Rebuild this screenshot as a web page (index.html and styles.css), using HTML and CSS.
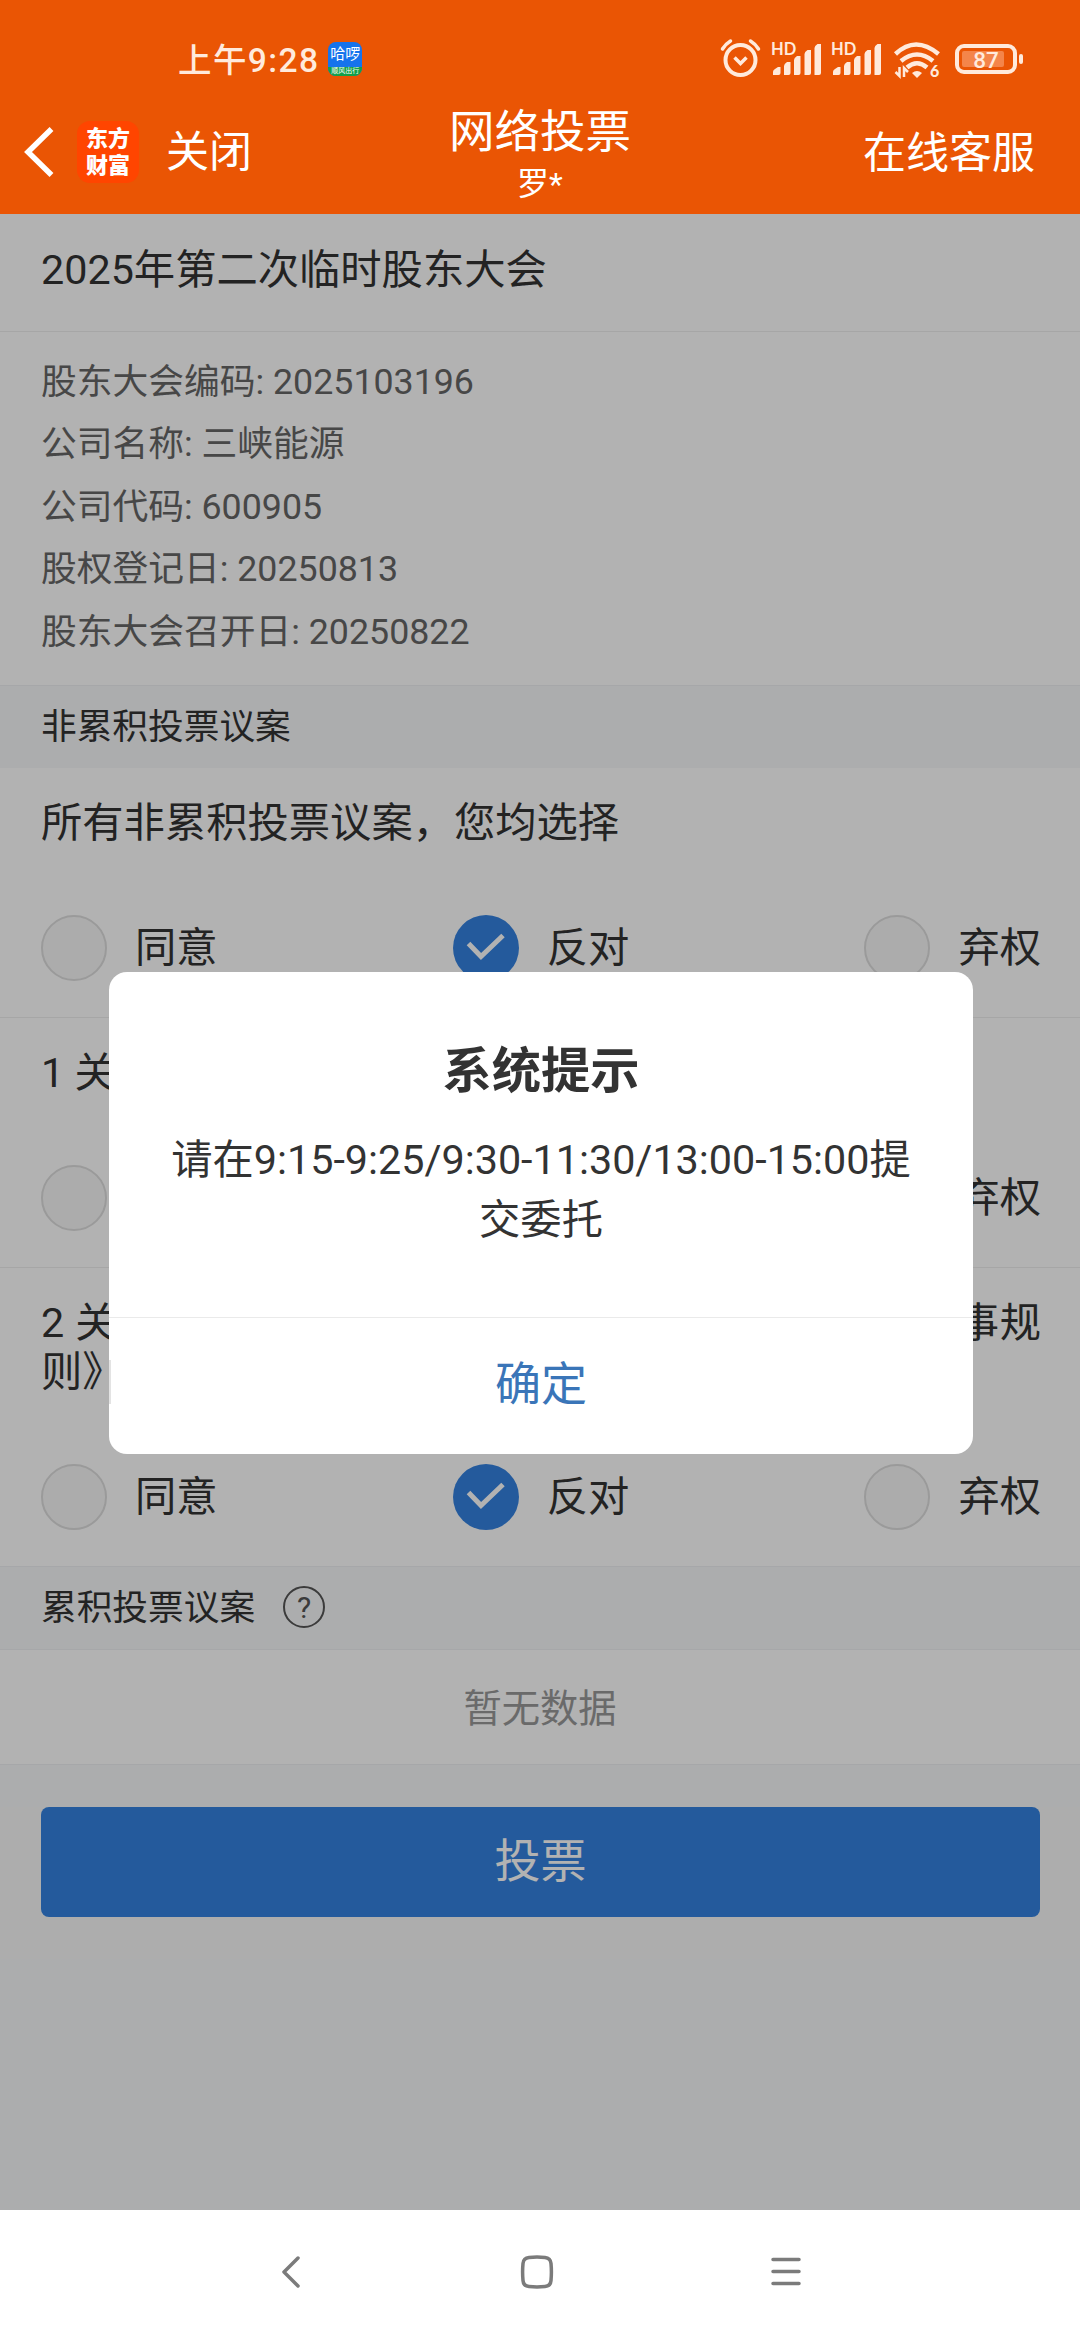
FILE: index.html
```
<!DOCTYPE html>
<html lang="zh-CN">
<head>
    <meta charset="UTF-8">
    <title>网络投票</title>
    <link rel="stylesheet" href="styles.css">
</head>
<body>

<header class="header">
    <div class="status-bar">
        <div class="status-left">
            <span class="time">上午9:28</span>
            <div class="hello-icon">
                <span class="hello-name">哈啰</span>
                <span class="hello-tag">顺风出行</span>
            </div>
        </div>
        <svg class="status-icons" width="310" height="50" viewBox="0 0 310 50" fill="none" stroke="#ffeadc">
            <!-- alarm -->
            <circle cx="20.500" cy="27" r="15" stroke-width="4"/>
            <path d="M14.500 24.500l6 6 6-6" stroke-width="3.500"/>
            <path d="M2.500 16q3-5 8-8M38.500 16q-3-5-8-8" stroke-width="3.500" stroke-linecap="round"/>
            <!-- signals -->
            <g id="signal" fill="#ffeadc" stroke="none">
                <text x="51" y="22" class="hd">HD</text>
                <path d="M53 42v-3q0-2 2-3l3-2h2.500v6q0 2-2 2zM64 42V33q0-2 3-4h3.500v11q0 2-2 2zM74 42V27q0-2 3-4h3.500v17q0 2-2 2zM84.500 42V21q0-2 3-4H91v23q0 2-2 2zM94.500 42V15q0-2 3-4h3.500v29q0 2-2 2z"/>
            </g>
            <use href="#signal" x="60"/>
            <!-- wifi -->
            <path d="M175.500 21q20-19 43 0M181 28q16-13 32 0M187 34.500q10-8.500 20 0" stroke-width="4.500"/>
            <path d="M192 40q5-4 10 0l-5 5z" fill="#ffeadc" stroke="none"/>
            <path d="M179.500 34v9l-4-4M184 44v-9l4 4" stroke-width="2.500"/>
            <text x="210" y="43.500" class="wifi-num">6</text>
            <!-- battery -->
            <rect x="237" y="13" width="58" height="26" rx="7" stroke-width="4"/>
            <rect x="242" y="18" width="42" height="16" rx="2" fill="#f4854a" stroke="none"/>
            <rect x="299" y="21" width="4" height="10" rx="2" fill="#ffeadc" stroke="none"/>
            <text x="266" y="34.500" text-anchor="middle" class="battery-num">87</text>
        </svg>
    </div>
    <nav class="navbar">
        <div class="nav-left">
            <svg class="back" width="30" height="52" viewBox="0 0 30 52" fill="none" stroke="#fff" stroke-width="5.500">
                <path d="M27.500 3L4 26l23.500 23"/>
            </svg>
            <div class="logo">东方<br>财富</div>
            <span class="nav-text">关闭</span>
        </div>
        <div class="nav-center">
            <div class="nav-title">网络投票</div>
            <div class="nav-user">罗*</div>
        </div>
        <span class="nav-text nav-right">在线客服</span>
    </nav>
</header>

<main class="page">
    <h1 class="meeting-title">2025年第二次临时股东大会</h1>
    <div class="meeting-info">
        <p>股东大会编码: 2025103196</p>
        <p>公司名称: 三峡能源</p>
        <p>公司代码: 600905</p>
        <p>股权登记日: 20250813</p>
        <p>股东大会召开日: 20250822</p>
    </div>

    <h2 class="section-title">非累积投票议案</h2>

    <div class="proposal">
        <p class="proposal-name">所有非累积投票议案，您均选择</p>
        <div class="options">
            <label class="option"><span class="radio"></span>同意</label>
            <label class="option"><span class="radio checked"><svg width="40" height="30" viewBox="0 0 40 30"><path d="M2.500 10.500L15 23.500 37 2.500"/></svg></span>反对</label>
            <label class="option"><span class="radio"></span>弃权</label>
        </div>
    </div>
    <div class="proposal">
        <p class="proposal-name">1 关于修订《公司章程》的议案</p>
        <div class="options">
            <label class="option"><span class="radio"></span>同意</label>
            <label class="option"><span class="radio checked"><svg width="40" height="30" viewBox="0 0 40 30"><path d="M2.500 10.500L15 23.500 37 2.500"/></svg></span>反对</label>
            <label class="option"><span class="radio"></span>弃权</label>
        </div>
    </div>
    <div class="proposal">
        <p class="proposal-name">2 关于公司修订《三峡能源股份有限公司董事会议事规则》的议案</p>
        <div class="options">
            <label class="option"><span class="radio"></span>同意</label>
            <label class="option"><span class="radio checked"><svg width="40" height="30" viewBox="0 0 40 30"><path d="M2.500 10.500L15 23.500 37 2.500"/></svg></span>反对</label>
            <label class="option"><span class="radio"></span>弃权</label>
        </div>
    </div>

    <h2 class="section-title cumulative">累积投票议案<span class="help">?</span></h2>
    <div class="empty">暂无数据</div>

    <div class="submit">
        <button class="submit-btn">投票</button>
    </div>

    <div class="mask">
        <div class="dialog">
            <div class="dialog-body">
                <h3>系统提示</h3>
                <p>请在9:15-9:25/9:30-11:30/13:00-15:00提交委托</p>
            </div>
            <button class="dialog-btn">确定</button>
        </div>
    </div>
</main>

<footer class="system-nav">
    <svg width="1080" height="130" viewBox="0 0 1080 130" fill="none" stroke="#7b7b7b" stroke-width="3.500" stroke-linecap="round" stroke-linejoin="round">
        <path d="M298 48l-14 14 14 14"/>
        <path d="M529 47.500q8-.8 16 0 5.500.5 6 6 .8 8.500 0 17-.5 5.500-6 6-8 .8-16 0-5.500-.5-6-6-.8-8.500 0-17 .5-5.500 6-6z"/>
        <path d="M773 49.500h26M773 61.500h26M773 73.500h26"/>
    </svg>
</footer>

</body>
</html>
```
FILE: styles.css
```
* {
    box-sizing: border-box;
}

body {
    width: 1080px;
    height: 2340px;
    margin: 0;
    display: flex;
    flex-direction: column;
    overflow: hidden;
    font-family: Roboto, "Noto Sans CJK SC", sans-serif;
    font-size: 41.300px;
    color: #333333;
}

h1, h2, h3, p {
    margin: 0;
    font-weight: normal;
}

button {
    border: none;
    font-family: inherit;
}

/* header */
.header {
    height: 214px;
    background-color: #ea5504;
    color: #ffffff;
}

.status-bar {
    height: 94px;
    padding: 35px 50px 0 178px;
    display: flex;
    justify-content: space-between;
}

.status-left {
    display: flex;
    align-items: center;
    height: 48px;
    gap: 9px;
}

.time {
    padding-bottom: 4px;
    color: #ffeadc;
    font-size: 33.500px;
    font-weight: 500;
    letter-spacing: 1.400px;
}

.hello-icon {
    width: 34px;
    height: 34px;
    border-radius: 8px;
    overflow: hidden;
    display: flex;
    flex-direction: column;
    justify-content: space-between;
    background-color: #1673ec;
    text-align: center;
    white-space: nowrap;
}

.hello-name {
    font-size: 15px;
    line-height: 25px;
}

.hello-tag {
    background-color: #12a048;
    font-size: 7px;
    line-height: 9px;
}

.status-icons {
    margin-top: -2px;
}

.hd {
    font: 700 16.500px Lato, sans-serif;
}

.wifi-num {
    font: 900 16px Lato, sans-serif;
    fill: #ffeadc;
    stroke: none;
}

.battery-num {
    font: 500 22.500px Roboto, sans-serif;
    fill: #ffeadc;
    stroke: none;
}

.navbar {
    height: 120px;
    display: grid;
    grid-template-columns: 1fr 200px 1fr;
}

.nav-left {
    display: flex;
    align-items: center;
    height: 116px;
    padding-left: 24px;
}

.logo {
    width: 62px;
    height: 62px;
    margin: 0 27px 0 23px;
    padding-top: 4px;
    border-radius: 13px;
    background-color: #ff4500;
    font-size: 22px;
    font-weight: 900;
    line-height: 27px;
    text-align: center;
}

.nav-text {
    font-size: 43px;
    line-height: 119px;
}

.nav-center {
    text-align: center;
}

.nav-title {
    padding-top: 8px;
    font-size: 45.500px;
    line-height: 62px;
}

.nav-user {
    font-size: 32px;
    line-height: 41px;
}

.nav-right {
    text-align: right;
    padding-right: 45px;
}

/* page content */
.page {
    position: relative;
    height: 1996px;
    background-color: #f7f8fa;
}

.meeting-title {
    height: 118px;
    padding: 0 41px;
    background-color: #ffffff;
    border-bottom: 1px solid #eeeeee;
    font-size: 41.300px;
    line-height: 112px;
}

.meeting-info {
    height: 353px;
    padding: 19px 41px 0;
    background-color: #ffffff;
    color: #666666;
    font-size: 35.750px;
    line-height: 62.400px;
}

.section-title {
    display: flex;
    align-items: center;
    height: 83px;
    padding: 0 41px 7px;
    border-top: 1px solid #eeeff2;
    background-color: #f7f8fa;
    font-size: 35.700px;
}

.cumulative {
    height: 84px;
    border-bottom: 1px solid #eeeff2;
}

.help {
    width: 42px;
    height: 42px;
    margin: 4px 0 0 28px;
    border: 2px solid #555555;
    border-radius: 50%;
    color: #555555;
    font-size: 30px;
    line-height: 39px;
    text-align: center;
}

.proposal {
    padding: 31px 39px 36px 41px;
    background-color: #ffffff;
}

.proposal + .proposal {
    border-top: 1px solid #eeeeee;
}

.proposal-name {
    margin-bottom: 67px;
    line-height: 49px;
    text-align: justify;
}

.options {
    display: flex;
    justify-content: space-between;
}

.option {
    display: flex;
    align-items: center;
    height: 66px;
    line-height: 66px;
}

.radio {
    width: 66px;
    height: 66px;
    margin-right: 28px;
    border: 2px solid #dddddd;
    border-radius: 50%;
    background-color: #f7f7f7;
}

.radio.checked {
    display: flex;
    align-items: center;
    justify-content: center;
    border: none;
    background-color: #3482e0;
}

.radio path {
    fill: none;
    stroke: #ffffff;
    stroke-width: 5;
}

.empty {
    height: 115px;
    border-bottom: 1px solid #eeeff2;
    background-color: #ffffff;
    color: #999999;
    font-size: 38.300px;
    line-height: 118px;
    text-align: center;
}

.submit {
    margin-top: 42px;
    padding: 0 40px 42px 41px;
    background-color: #f8f8f8;
}

.submit-btn {
    display: block;
    width: 100%;
    height: 110px;
    padding-bottom: 12px;
    border-radius: 8px;
    background-color: #3482e0;
    color: #ffffff;
    font-size: 46px;
}

/* dialog */
.mask {
    position: absolute;
    inset: 0;
    display: flex;
    justify-content: center;
    align-items: center;
    background-color: rgba(0, 0, 0, 0.3);
}

.dialog {
    width: 864px;
    height: 482px;
    margin: 2px 0 0 2px;
    border-radius: 18px;
    background-color: #ffffff;
    text-align: center;
}

.dialog-body {
    height: 346px;
    padding: 63px 60px 0;
    border-bottom: 1px solid #eaeaea;
}

.dialog-body h3 {
    font-size: 49.300px;
    font-weight: bold;
    line-height: 72px;
}

.dialog-body p {
    margin-top: 23px;
    line-height: 60px;
}

.dialog-btn {
    position: relative;
    width: 100%;
    height: 135px;
    padding-bottom: 12px;
    background: none;
    color: #3a75b8;
    font-size: 46px;
}

.dialog-btn::before {
    content: "";
    position: absolute;
    left: 0;
    top: 42px;
    width: 2px;
    height: 44px;
    background-color: #e3e3e3;
}

/* system navigation */
.system-nav {
    height: 130px;
    background-color: #ffffff;
}
```
